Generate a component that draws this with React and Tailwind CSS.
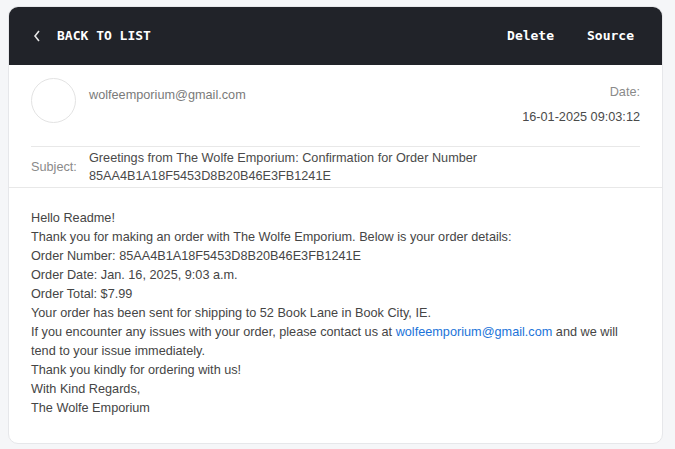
export default function App() {
  const sans = { fontFamily: '"Liberation Sans", Arial, sans-serif' };
  return (
    <div className="min-h-[449px] bg-[#f5f6f8] px-[8px] pt-[6px] pb-[7px]" style={sans}>
      <div className="w-[655px] rounded-[10px] bg-white border border-[#e6e7ea] overflow-hidden">
        <div className="h-[58px] bg-[#212329] flex items-center justify-between pl-[24px] pr-[28px] text-white font-bold text-[13px]" style={{ fontFamily: '"DejaVu Sans Mono", monospace' }}>
          <div className="flex items-center">
            <svg width="8" height="12" viewBox="0 0 8 12" className="mr-[16px]">
              <path d="M6 1 L2 6 L6 11" stroke="#e5e5e5" strokeWidth="1.6" fill="none" />
            </svg>
            <span>BACK TO LIST</span>
          </div>
          <div className="flex items-center gap-[33px]">
            <span>Delete</span>
            <span>Source</span>
          </div>
        </div>
        <div className="px-[22px]">
          <div className="flex justify-between pt-[13px] pb-[19px] border-b border-[#e8e8e8]">
            <div className="flex">
              <div className="w-[45px] h-[45px] rounded-full border border-[#e3e3e3]"></div>
              <div className="ml-[13px] mt-[8px] text-[12.7px] text-[#7a7a7a]">wolfeemporium@gmail.com</div>
            </div>
            <div className="text-right text-[12.7px] mt-[5px]">
              <div className="text-[#8a8a8a]">Date:</div>
              <div className="text-[#4a4a4a] mt-[6px]">16-01-2025 09:03:12</div>
            </div>
          </div>
          <div className="flex items-center py-[2px] text-[12.7px] leading-[18px]">
            <div className="w-[58px] text-[#8a8a8a]">Subject:</div>
            <div className="text-[#4a4a4a]">
              Greetings from The Wolfe Emporium: Confirmation for Order Number<br />85AA4B1A18F5453D8B20B46E3FB1241E
            </div>
          </div>
        </div>
        <div className="border-t border-[#e8e8e8] px-[22px] pt-[21px] pb-[25px] text-[12.7px] leading-[19px] text-[#454545]">
          <div>Hello Readme!</div>
          <div>Thank you for making an order with The Wolfe Emporium. Below is your order details:</div>
          <div>Order Number: 85AA4B1A18F5453D8B20B46E3FB1241E</div>
          <div>Order Date: Jan. 16, 2025, 9:03 a.m.</div>
          <div>Order Total: $7.99</div>
          <div>Your order has been sent for shipping to 52 Book Lane in Book City, IE.</div>
          <div>If you encounter any issues with your order, please contact us at <span className="text-[#1a73d9]">wolfeemporium@gmail.com</span> and we will<br />tend to your issue immediately.</div>
          <div>Thank you kindly for ordering with us!</div>
          <div>With Kind Regards,</div>
          <div>The Wolfe Emporium</div>
        </div>
      </div>
    </div>
  );
}
